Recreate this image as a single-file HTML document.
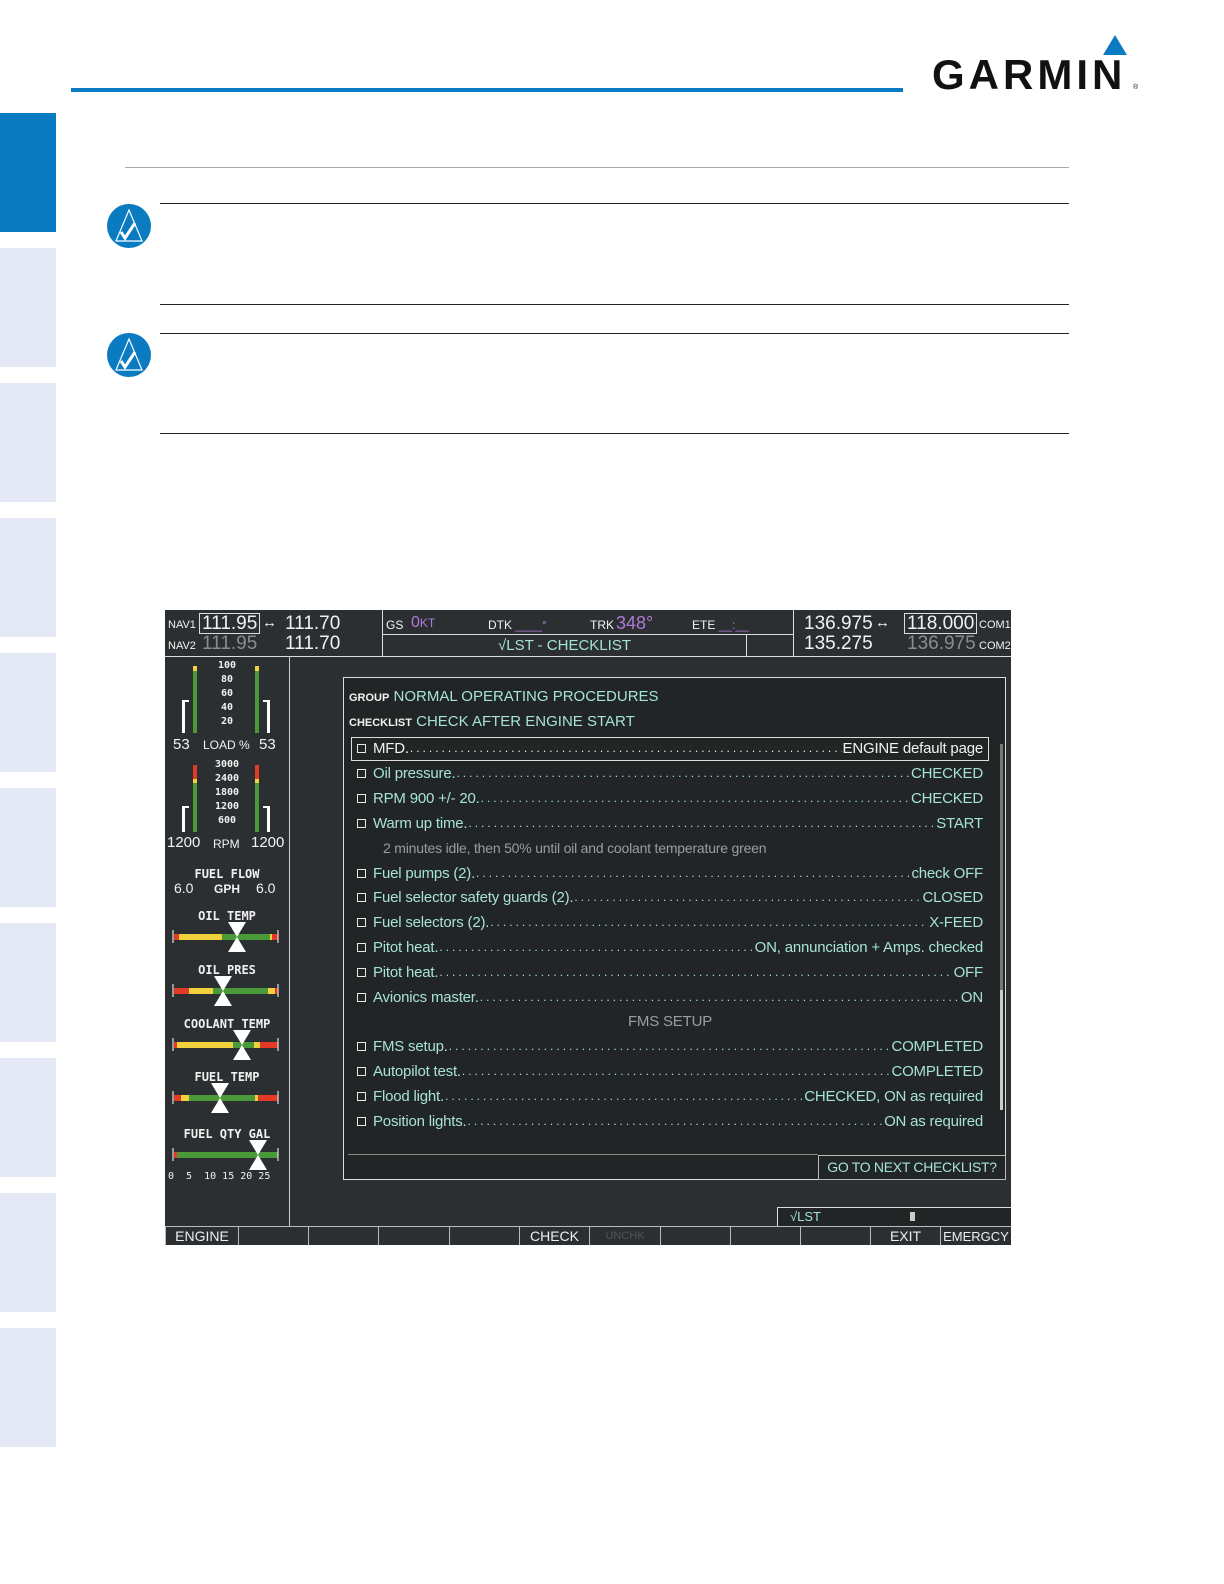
<!DOCTYPE html>
<html><head><meta charset="utf-8"><style>
*{margin:0;padding:0;box-sizing:border-box}
body{width:1224px;height:1584px;background:#fff;position:relative;overflow:hidden;font-family:"Liberation Sans",sans-serif}
.a{position:absolute}
.tab{position:absolute;left:0;width:56px;background:#e4e9f5}
.scr{position:absolute;left:165px;top:610px;width:846px;height:635px;background:#2c2f31;overflow:hidden;font-family:"Liberation Sans Narrow","Liberation Sans",sans-serif}
.w{color:#f2f2f2}
.t{color:#a6e3d3}
.m{color:#b07ad8}
.g{color:#8a8d8f}
.row{position:absolute;left:14px;width:626px;height:20px;display:flex;align-items:center;font-size:15px;color:#a6e3d3;white-space:nowrap;letter-spacing:-0.2px}
.row .bx{width:9px;height:9px;border:1px solid #e8e8e8;margin-right:7px;flex:none}
.row .d{flex:1;overflow:hidden;letter-spacing:3px;margin:0 1px;color:#a6e3d3;font-size:12px;white-space:nowrap;min-width:0}
.lbl{position:absolute;color:#f0f0f0;font-size:12px;font-family:"DejaVu Sans Mono",monospace;font-weight:bold;text-align:center;width:124px;left:0}
.sk{position:absolute;top:616px;height:19px;border-left:1px solid #bbb;border-top:1px solid #bbb;color:#eee;font-size:14px;text-align:center;line-height:19px}
</style></head><body>
<div class="a" style="left:71px;top:88px;width:832px;height:4px;background:#0a7bc1"></div>
<div class="a" style="left:932px;top:53px;font-size:42px;font-weight:bold;letter-spacing:4px;color:#111;line-height:44px">GARMIN</div>
<div class="a" style="left:1133px;top:84px;font-size:7px;color:#111">®</div>
<svg class="a" style="left:1102px;top:35px" width="26" height="22"><polygon points="13,0 25,20 1,20" fill="#0a7bc1"/></svg>
<div class="a" style="left:0;top:113px;width:56px;height:119px;background:#0a7bc1"></div>
<div class="tab" style="top:248px;height:119px"></div>
<div class="tab" style="top:383px;height:119px"></div>
<div class="tab" style="top:518px;height:119px"></div>
<div class="tab" style="top:653px;height:119px"></div>
<div class="tab" style="top:788px;height:119px"></div>
<div class="tab" style="top:923px;height:119px"></div>
<div class="tab" style="top:1058px;height:119px"></div>
<div class="tab" style="top:1193px;height:119px"></div>
<div class="tab" style="top:1328px;height:119px"></div>
<div class="a" style="left:125px;top:167px;width:944px;height:1px;background:#aaa"></div>
<div class="a" style="left:160px;top:203px;width:909px;height:1px;background:#222"></div>
<div class="a" style="left:160px;top:304px;width:909px;height:1px;background:#222"></div>
<div class="a" style="left:160px;top:333px;width:909px;height:1px;background:#222"></div>
<div class="a" style="left:160px;top:433px;width:909px;height:1px;background:#222"></div>
<svg class="a" style="left:106px;top:203px" width="46" height="46"><circle cx="23" cy="23" r="22" fill="#0a7bc1"/><polygon points="23,7 36,38 10,38" fill="none" stroke="#fff" stroke-width="1.2"/><path d="M15 29 L19 35 L29 20" fill="none" stroke="#fff" stroke-width="3"/></svg>
<svg class="a" style="left:106px;top:332px" width="46" height="46"><circle cx="23" cy="23" r="22" fill="#0a7bc1"/><polygon points="23,7 36,38 10,38" fill="none" stroke="#fff" stroke-width="1.2"/><path d="M15 29 L19 35 L29 20" fill="none" stroke="#fff" stroke-width="3"/></svg>

<div class="scr">
 <div class="a" style="left:0;top:46px;width:846px;height:1px;background:#ddd"></div>
 <div class="a" style="left:217px;top:0;width:1px;height:46px;background:#ddd"></div>
 <div class="a" style="left:628px;top:0;width:1px;height:46px;background:#ddd"></div>
 <div class="a" style="left:217px;top:24px;width:411px;height:1px;background:#ddd"></div>
 <div class="a" style="left:581px;top:24px;width:1px;height:22px;background:#ddd"></div>
 <div class="a w" style="left:3px;top:9px;font-size:11px">NAV1</div>
 <div class="a w" style="left:34px;top:3px;font-size:19px;border:1px solid #ddd;padding:0 2px;line-height:19px">111.95</div>
 <div class="a w" style="left:97px;top:4px;font-size:15px">↔</div>
 <div class="a w" style="left:120px;top:3px;font-size:19px">111.70</div>
 <div class="a w" style="left:3px;top:30px;font-size:11px">NAV2</div>
 <div class="a g" style="left:37px;top:23px;font-size:19px">111.95</div>
 <div class="a w" style="left:120px;top:23px;font-size:19px">111.70</div>
 <div class="a w" style="left:221px;top:8px;font-size:12px">GS</div>
 <div class="a m" style="left:246px;top:4px;font-size:16px">0<span style="font-size:12px">KT</span></div>
 <div class="a w" style="left:323px;top:8px;font-size:12px">DTK <span class="m">____°</span></div>
 <div class="a w" style="left:425px;top:8px;font-size:12px">TRK</div>
 <div class="a m" style="left:451px;top:3px;font-size:18px">348°</div>
 <div class="a w" style="left:527px;top:8px;font-size:12px">ETE <span class="m">__:__</span></div>
 <div class="a t" style="left:333px;top:27px;font-size:15px">√LST - CHECKLIST</div>
 <div class="a w" style="left:639px;top:3px;font-size:19px">136.975</div>
 <div class="a w" style="left:710px;top:4px;font-size:15px">↔</div>
 <div class="a w" style="left:739px;top:3px;font-size:19px;border:1px solid #ddd;padding:0 2px;line-height:19px">118.000</div>
 <div class="a w" style="left:814px;top:9px;font-size:11px">COM1</div>
 <div class="a w" style="left:639px;top:23px;font-size:19px">135.275</div>
 <div class="a g" style="left:742px;top:23px;font-size:19px">136.975</div>
 <div class="a w" style="left:814px;top:30px;font-size:11px">COM2</div>
 <div class="a" style="left:124px;top:46px;width:1px;height:570px;background:#ccc"></div>
 <div class="a" style="left:28px;top:56px;width:4px;height:67px;background:#4a9a3a"></div>
 <div class="a" style="left:28px;top:56px;width:4px;height:5px;background:#f1d23c"></div>
 <div class="a" style="left:90px;top:56px;width:4px;height:67px;background:#4a9a3a"></div>
 <div class="a" style="left:90px;top:56px;width:4px;height:5px;background:#f1d23c"></div>
 <div class="a" style="left:17px;top:90px;width:3px;height:33px;background:#fff"></div>
 <div class="a" style="left:17px;top:90px;width:7px;height:2px;background:#fff"></div>
 <div class="a" style="left:102px;top:90px;width:3px;height:33px;background:#fff"></div>
 <div class="a" style="left:98px;top:90px;width:7px;height:2px;background:#fff"></div>
 <div class="lbl" style="top:49px;font-size:10px;line-height:14px">100<br>80<br>60<br>40<br>20</div>
 <div class="a w" style="left:8px;top:126px;font-size:15px">53</div>
 <div class="a w" style="left:38px;top:128px;font-size:12px">LOAD %</div>
 <div class="a w" style="left:94px;top:126px;font-size:15px">53</div>
 <div class="a" style="left:28px;top:155px;width:4px;height:67px;background:#4a9a3a"></div>
 <div class="a" style="left:28px;top:155px;width:4px;height:14px;background:#e23a26"></div>
 <div class="a" style="left:28px;top:169px;width:4px;height:4px;background:#f1d23c"></div>
 <div class="a" style="left:90px;top:155px;width:4px;height:67px;background:#4a9a3a"></div>
 <div class="a" style="left:90px;top:155px;width:4px;height:14px;background:#e23a26"></div>
 <div class="a" style="left:90px;top:169px;width:4px;height:4px;background:#f1d23c"></div>
 <div class="a" style="left:17px;top:196px;width:3px;height:26px;background:#fff"></div>
 <div class="a" style="left:17px;top:196px;width:7px;height:2px;background:#fff"></div>
 <div class="a" style="left:102px;top:196px;width:3px;height:26px;background:#fff"></div>
 <div class="a" style="left:98px;top:196px;width:7px;height:2px;background:#fff"></div>
 <div class="lbl" style="top:148px;font-size:10px;line-height:14px">3000<br>2400<br>1800<br>1200<br>600</div>
 <div class="a w" style="left:2px;top:224px;font-size:15px">1200</div>
 <div class="a w" style="left:48px;top:227px;font-size:12px">RPM</div>
 <div class="a w" style="left:86px;top:224px;font-size:15px">1200</div>
 <div class="lbl" style="top:257px">FUEL FLOW</div>
 <div class="a w" style="left:9px;top:270px;font-size:14px">6.0</div>
 <div class="a w" style="left:49px;top:272px;font-size:12px;font-weight:bold">GPH</div>
 <div class="a w" style="left:91px;top:270px;font-size:14px">6.0</div>
 <div class="lbl" style="top:299px">OIL TEMP</div>
 <div class="lbl" style="top:353px">OIL PRES</div>
 <div class="lbl" style="top:407px">COOLANT TEMP</div>
 <div class="lbl" style="top:460px">FUEL TEMP</div>
 <div class="lbl" style="top:517px">FUEL QTY GAL</div>
 <svg class="a" style="left:0;top:300px" width="124" height="280">
  <g transform="translate(0,24)">
   <rect x="9" y="0" width="104" height="6" fill="#e23a26"/><rect x="14" y="0" width="43" height="6" fill="#f1d23c"/><rect x="57" y="0" width="48" height="6" fill="#4a9a3a"/><rect x="105" y="0" width="2" height="6" fill="#f1d23c"/>
   <line x1="8" y1="-4" x2="8" y2="9" stroke="#fff"/><line x1="113" y1="-4" x2="113" y2="9" stroke="#fff"/>
   <polygon points="63,-12 81,-12 72,3" fill="#fff"/><polygon points="63,18 81,18 72,3" fill="#fff"/>
  </g>
  <g transform="translate(0,78)">
   <rect x="9" y="0" width="104" height="6" fill="#e23a26"/><rect x="24" y="0" width="24" height="6" fill="#f1d23c"/><rect x="48" y="0" width="55" height="6" fill="#4a9a3a"/><rect x="103" y="0" width="7" height="6" fill="#f1d23c"/>
   <line x1="8" y1="-4" x2="8" y2="9" stroke="#fff"/><line x1="113" y1="-4" x2="113" y2="9" stroke="#fff"/>
   <polygon points="49,-12 67,-12 58,3" fill="#fff"/><polygon points="49,18 67,18 58,3" fill="#fff"/>
  </g>
  <g transform="translate(0,132)">
   <rect x="9" y="0" width="104" height="6" fill="#e23a26"/><rect x="12" y="0" width="56" height="6" fill="#f1d23c"/><rect x="68" y="0" width="21" height="6" fill="#4a9a3a"/><rect x="89" y="0" width="6" height="6" fill="#f1d23c"/>
   <line x1="8" y1="-4" x2="8" y2="9" stroke="#fff"/><line x1="113" y1="-4" x2="113" y2="9" stroke="#fff"/>
   <polygon points="68,-12 86,-12 77,3" fill="#fff"/><polygon points="68,18 86,18 77,3" fill="#fff"/>
  </g>
  <g transform="translate(0,185)">
   <rect x="9" y="0" width="104" height="6" fill="#e23a26"/><rect x="16" y="0" width="8" height="6" fill="#f1d23c"/><rect x="24" y="0" width="66" height="6" fill="#4a9a3a"/><rect x="90" y="0" width="3" height="6" fill="#f1d23c"/>
   <line x1="8" y1="-4" x2="8" y2="9" stroke="#fff"/><line x1="113" y1="-4" x2="113" y2="9" stroke="#fff"/>
   <polygon points="46,-12 64,-12 55,3" fill="#fff"/><polygon points="46,18 64,18 55,3" fill="#fff"/>
  </g>
  <g transform="translate(0,242)">
   <rect x="9" y="0" width="104" height="6" fill="#4a9a3a"/><rect x="9" y="0" width="3" height="6" fill="#e23a26"/>
   <line x1="8" y1="-4" x2="8" y2="9" stroke="#fff"/><line x1="113" y1="-4" x2="113" y2="9" stroke="#fff"/>
   <polygon points="84,-12 102,-12 93,3" fill="#fff"/><polygon points="84,18 102,18 93,3" fill="#fff"/>
  </g>
 </svg>
 <div class="a w" style="left:3px;top:561px;font-size:10px;font-family:'DejaVu Sans Mono',monospace;white-space:pre">0  5  10 15 20 25</div>
 <div class="a" style="left:178px;top:67px;width:663px;height:503px;border:1px solid #ddd;background:#222526"></div>
 <div class="a t" style="left:184px;top:78px;font-size:15px"><span class="w" style="font-size:11px;font-weight:bold">GROUP</span> NORMAL OPERATING PROCEDURES</div>
 <div class="a t" style="left:184px;top:103px;font-size:15px"><span class="w" style="font-size:11px;font-weight:bold">CHECKLIST</span> CHECK AFTER ENGINE START</div>
 <div class="a" style="left:186px;top:127px;width:638px;height:24px;border:1px solid #ddd"></div>
 <div style="position:absolute;left:178px;top:128px">
  <div class="row" style="top:0;color:#f2f2f2"><span class="bx"></span>MFD.<span class="d" style="color:#f2f2f2">..................................................................................................................................</span>ENGINE default page</div>
  <div class="row" style="top:25px"><span class="bx"></span>Oil pressure.<span class="d">..................................................................................................................................</span>CHECKED</div>
  <div class="row" style="top:50px"><span class="bx"></span>RPM 900 +/- 20.<span class="d">..................................................................................................................................</span>CHECKED</div>
  <div class="row" style="top:75px"><span class="bx"></span>Warm up time.<span class="d">..................................................................................................................................</span>START</div>
  <div class="row" style="top:100px;color:#9a9d9f;left:40px;font-size:14px">2 minutes idle, then 50% until oil and coolant temperature green</div>
  <div class="row" style="top:125px"><span class="bx"></span>Fuel pumps (2).<span class="d">..................................................................................................................................</span>check OFF</div>
  <div class="row" style="top:149px"><span class="bx"></span>Fuel selector safety guards (2).<span class="d">..................................................................................................................................</span>CLOSED</div>
  <div class="row" style="top:174px"><span class="bx"></span>Fuel selectors (2).<span class="d">..................................................................................................................................</span>X-FEED</div>
  <div class="row" style="top:199px"><span class="bx"></span>Pitot heat.<span class="d">..................................................................................................................................</span>ON, annunciation + Amps. checked</div>
  <div class="row" style="top:224px"><span class="bx"></span>Pitot heat.<span class="d">..................................................................................................................................</span>OFF</div>
  <div class="row" style="top:249px"><span class="bx"></span>Avionics master.<span class="d">..................................................................................................................................</span>ON</div>
  <div class="row" style="top:273px;justify-content:center;color:#9a9d9f">FMS SETUP</div>
  <div class="row" style="top:298px"><span class="bx"></span>FMS setup.<span class="d">..................................................................................................................................</span>COMPLETED</div>
  <div class="row" style="top:323px"><span class="bx"></span>Autopilot test.<span class="d">..................................................................................................................................</span>COMPLETED</div>
  <div class="row" style="top:348px"><span class="bx"></span>Flood light.<span class="d">..................................................................................................................................</span>CHECKED, ON as required</div>
  <div class="row" style="top:373px"><span class="bx"></span>Position lights.<span class="d">..................................................................................................................................</span>ON as required</div>
 </div>
 <div class="a" style="left:835px;top:134px;width:3px;height:366px;background:#777"></div>
 <div class="a" style="left:835px;top:380px;width:3px;height:120px;background:#ccc"></div>
 <div class="a" style="left:183px;top:544px;width:470px;height:1px;background:#888"></div>
 <div class="a t" style="left:653px;top:545px;width:188px;height:25px;border:1px solid #bbb;font-size:14px;text-align:center;line-height:23px;background:#222526;white-space:nowrap;letter-spacing:-0.3px">GO TO NEXT CHECKLIST?</div>
 <div class="a" style="left:612px;top:597px;width:234px;height:19px;border-left:1px solid #ddd;border-top:1px solid #ddd;background:#222526"></div>
 <div class="a t" style="left:625px;top:599px;font-size:13px">√LST</div>
 <div class="a" style="left:745px;top:602px;width:5px;height:9px;background:#ccc"></div>
 <div class="sk" style="left:0;width:73px">ENGINE</div>
 <div class="sk" style="left:73px;width:70px"></div>
 <div class="sk" style="left:143px;width:70px"></div>
 <div class="sk" style="left:213px;width:71px"></div>
 <div class="sk" style="left:284px;width:70px"></div>
 <div class="sk" style="left:354px;width:70px">CHECK</div>
 <div class="sk" style="left:424px;width:71px;color:#555;font-size:11px">UNCHK</div>
 <div class="sk" style="left:495px;width:70px"></div>
 <div class="sk" style="left:565px;width:70px"></div>
 <div class="sk" style="left:635px;width:70px"></div>
 <div class="sk" style="left:705px;width:70px">EXIT</div>
 <div class="sk" style="left:775px;width:71px;font-size:13px">EMERGCY</div>
</div>
</body></html>
